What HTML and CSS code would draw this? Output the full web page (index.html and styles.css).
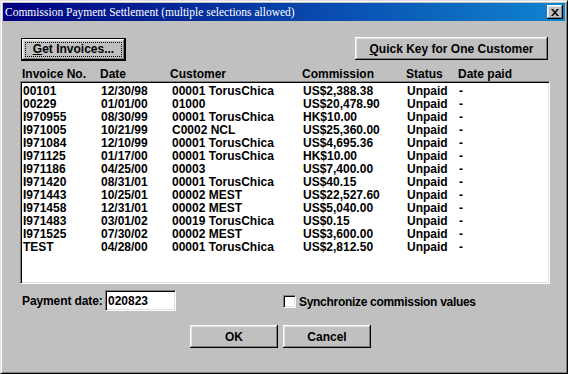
FILE: index.html
```html
<!DOCTYPE html>
<html lang="en">
<head>
    <meta charset="UTF-8">
    <title>Commission Payment Settlement</title>
    <link rel="stylesheet" href="styles.css">
</head>
<body>
    <div class="window">
        <div class="titlebar">
            <span class="title">Commission Payment Settlement (multiple selections allowed)</span>
            <button class="close-btn" title="Close">
                <svg width="8" height="7" viewBox="0 0 8 7">
                    <path d="M0 0h2l2 2.5L6 0h2L5 3.5 8 7H6L4 4.5 2 7H0l3-3.5z" fill="#000"/>
                </svg>
            </button>
        </div>

        <div class="content">
            <div class="top-buttons">
                <button class="btn btn-default get-btn"><span class="focus"><u>G</u>et Invoices...</span></button>
                <button class="btn quick-btn"><u>Q</u>uick Key for One Customer</button>
            </div>

            <div class="row head">
                <span>Invoice No.</span>
                <span>Date</span>
                <span>Customer</span>
                <span>Commission</span>
                <span>Status</span>
                <span>Date paid</span>
            </div>

            <div class="listbox" id="invoiceList"></div>

            <div class="footer">
                <label class="pay-label" for="payDate">Payment date:</label>
                <input class="field" id="payDate" type="text" value="020823">
                <label class="sync">
                    <span class="checkbox"></span>
                    Synchronize commission values
                </label>
            </div>

            <div class="actions">
                <button class="btn action-btn">OK</button>
                <button class="btn action-btn">Cancel</button>
            </div>
        </div>
    </div>

    <script>
        // invoice no, date, customer, commission
        const invoices = [
            ["00101", "12/30/98", "00001 TorusChica", "US$2,388.38"],
            ["00229", "01/01/00", "01000", "US$20,478.90"],
            ["I970955", "08/30/99", "00001 TorusChica", "HK$10.00"],
            ["I971005", "10/21/99", "C0002 NCL", "US$25,360.00"],
            ["I971084", "12/10/99", "00001 TorusChica", "US$4,695.36"],
            ["I971125", "01/17/00", "00001 TorusChica", "HK$10.00"],
            ["I971186", "04/25/00", "00003", "US$7,400.00"],
            ["I971420", "08/31/01", "00001 TorusChica", "US$40.15"],
            ["I971443", "10/25/01", "00002 MEST", "US$22,527.60"],
            ["I971458", "12/31/01", "00002 MEST", "US$5,040.00"],
            ["I971483", "03/01/02", "00019 TorusChica", "US$0.15"],
            ["I971525", "07/30/02", "00002 MEST", "US$3,600.00"],
            ["TEST", "04/28/00", "00001 TorusChica", "US$2,812.50"]
        ];

        const list = document.getElementById("invoiceList");
        invoices.forEach(function (inv) {
            const row = document.createElement("div");
            row.className = "row item";
            const cells = inv.concat(["Unpaid", "-"]);
            cells.forEach(function (text) {
                const cell = document.createElement("span");
                cell.textContent = text;
                row.appendChild(cell);
            });
            list.appendChild(row);
        });
    </script>
</body>
</html>
```

FILE: styles.css
```css
body {
    margin: 0;
    background: #c0c0c0;
    font-family: "Liberation Sans", Arial, sans-serif;
    font-size: 12px;
    font-weight: bold;
}

.window {
    width: 568px;
    height: 374px;
    box-sizing: border-box;
    background: #c0c0c0;
    border: 1px solid;
    border-color: #dfdfdf #000 #000 #dfdfdf;
    box-shadow: inset 1px 1px #fff, inset -1px -1px #808080;
    padding: 2px;
    display: flex;
    flex-direction: column;
}

.titlebar {
    height: 18px;
    background: linear-gradient(to right, #000080, #1084d0);
    display: flex;
    align-items: center;
    justify-content: space-between;
    padding: 0 2px 0 2px;
}

.title {
    color: #fff;
    font-family: "Liberation Serif", "Times New Roman", serif;
    font-weight: normal;
    font-size: 11.5px;
    white-space: nowrap;
}

.close-btn {
    width: 16px;
    height: 14px;
    padding: 0;
    background: #c0c0c0;
    border: none;
    box-shadow: inset -1px -1px #000, inset 1px 1px #fff, inset -2px -2px #808080, inset 2px 2px #dfdfdf;
    display: flex;
    align-items: center;
    justify-content: center;
}

.content {
    padding: 0 15px 0 17px;
    display: flex;
    flex-direction: column;
}

.btn {
    font-family: inherit;
    font-size: 12px;
    font-weight: bold;
    color: #000;
    height: 23px;
    padding: 0;
    background: #c0c0c0;
    border: none;
    box-shadow: inset -1px -1px #000, inset 1px 1px #fff, inset -2px -2px #808080, inset 2px 2px #dfdfdf;
}

.top-buttons {
    display: flex;
    justify-content: space-between;
    margin-top: 16px;
}

.get-btn {
    width: 105px;
    margin-left: 1px;
    margin-top: 1px;
    padding: 4px;
    box-shadow: inset 0 0 0 1px #000, inset -2px -2px #000, inset 2px 2px #fff, inset -3px -3px #808080, inset 3px 3px #dfdfdf;
}

.focus {
    display: block;
    height: 100%;
    box-sizing: border-box;
    border: 1px dotted #000;
    line-height: 13px;
}

.quick-btn {
    width: 193px;
    margin-right: 2px;
}

.row {
    display: grid;
    grid-template-columns: 78px 70px 132px 104px 52px 1fr;
    height: 13px;
    line-height: 13px;
    white-space: nowrap;
}

.head {
    margin-top: 7px;
    padding-left: 2px;
}

.listbox {
    height: 203px;
    box-sizing: border-box;
    background: #fff;
    border: 1px solid;
    border-color: #808080 #fff #fff #808080;
    box-shadow: inset 1px 1px #000, inset -1px -1px #dfdfdf;
    padding: 3px 1px 0 2px;
}

.item span:nth-child(3) {
    padding-left: 1px;
}

.footer {
    display: flex;
    align-items: center;
    margin-top: 6px;
    height: 21px;
}

.pay-label {
    margin-left: 2px;
    width: 83px;
    letter-spacing: -0.1px;
}

.field {
    width: 71px;
    height: 21px;
    box-sizing: border-box;
    margin: 0;
    padding: 0 2px;
    font-family: inherit;
    font-size: 12px;
    font-weight: bold;
    background: #fff;
    border: 1px solid;
    border-color: #808080 #fff #fff #808080;
    box-shadow: inset 1px 1px #000, inset -1px -1px #dfdfdf;
    outline: none;
}

.sync {
    display: flex;
    align-items: center;
    gap: 3px;
    margin-left: 107px;
    margin-top: 2px;
    letter-spacing: -0.3px;
}

.checkbox {
    width: 13px;
    height: 13px;
    box-sizing: border-box;
    background: #fff;
    border: 1px solid;
    border-color: #808080 #fff #fff #808080;
    box-shadow: inset 1px 1px #000, inset -1px -1px #dfdfdf;
}

.actions {
    display: flex;
    gap: 5px;
    margin-top: 14px;
    margin-left: 170px;
}

.action-btn {
    width: 88px;
}
```
